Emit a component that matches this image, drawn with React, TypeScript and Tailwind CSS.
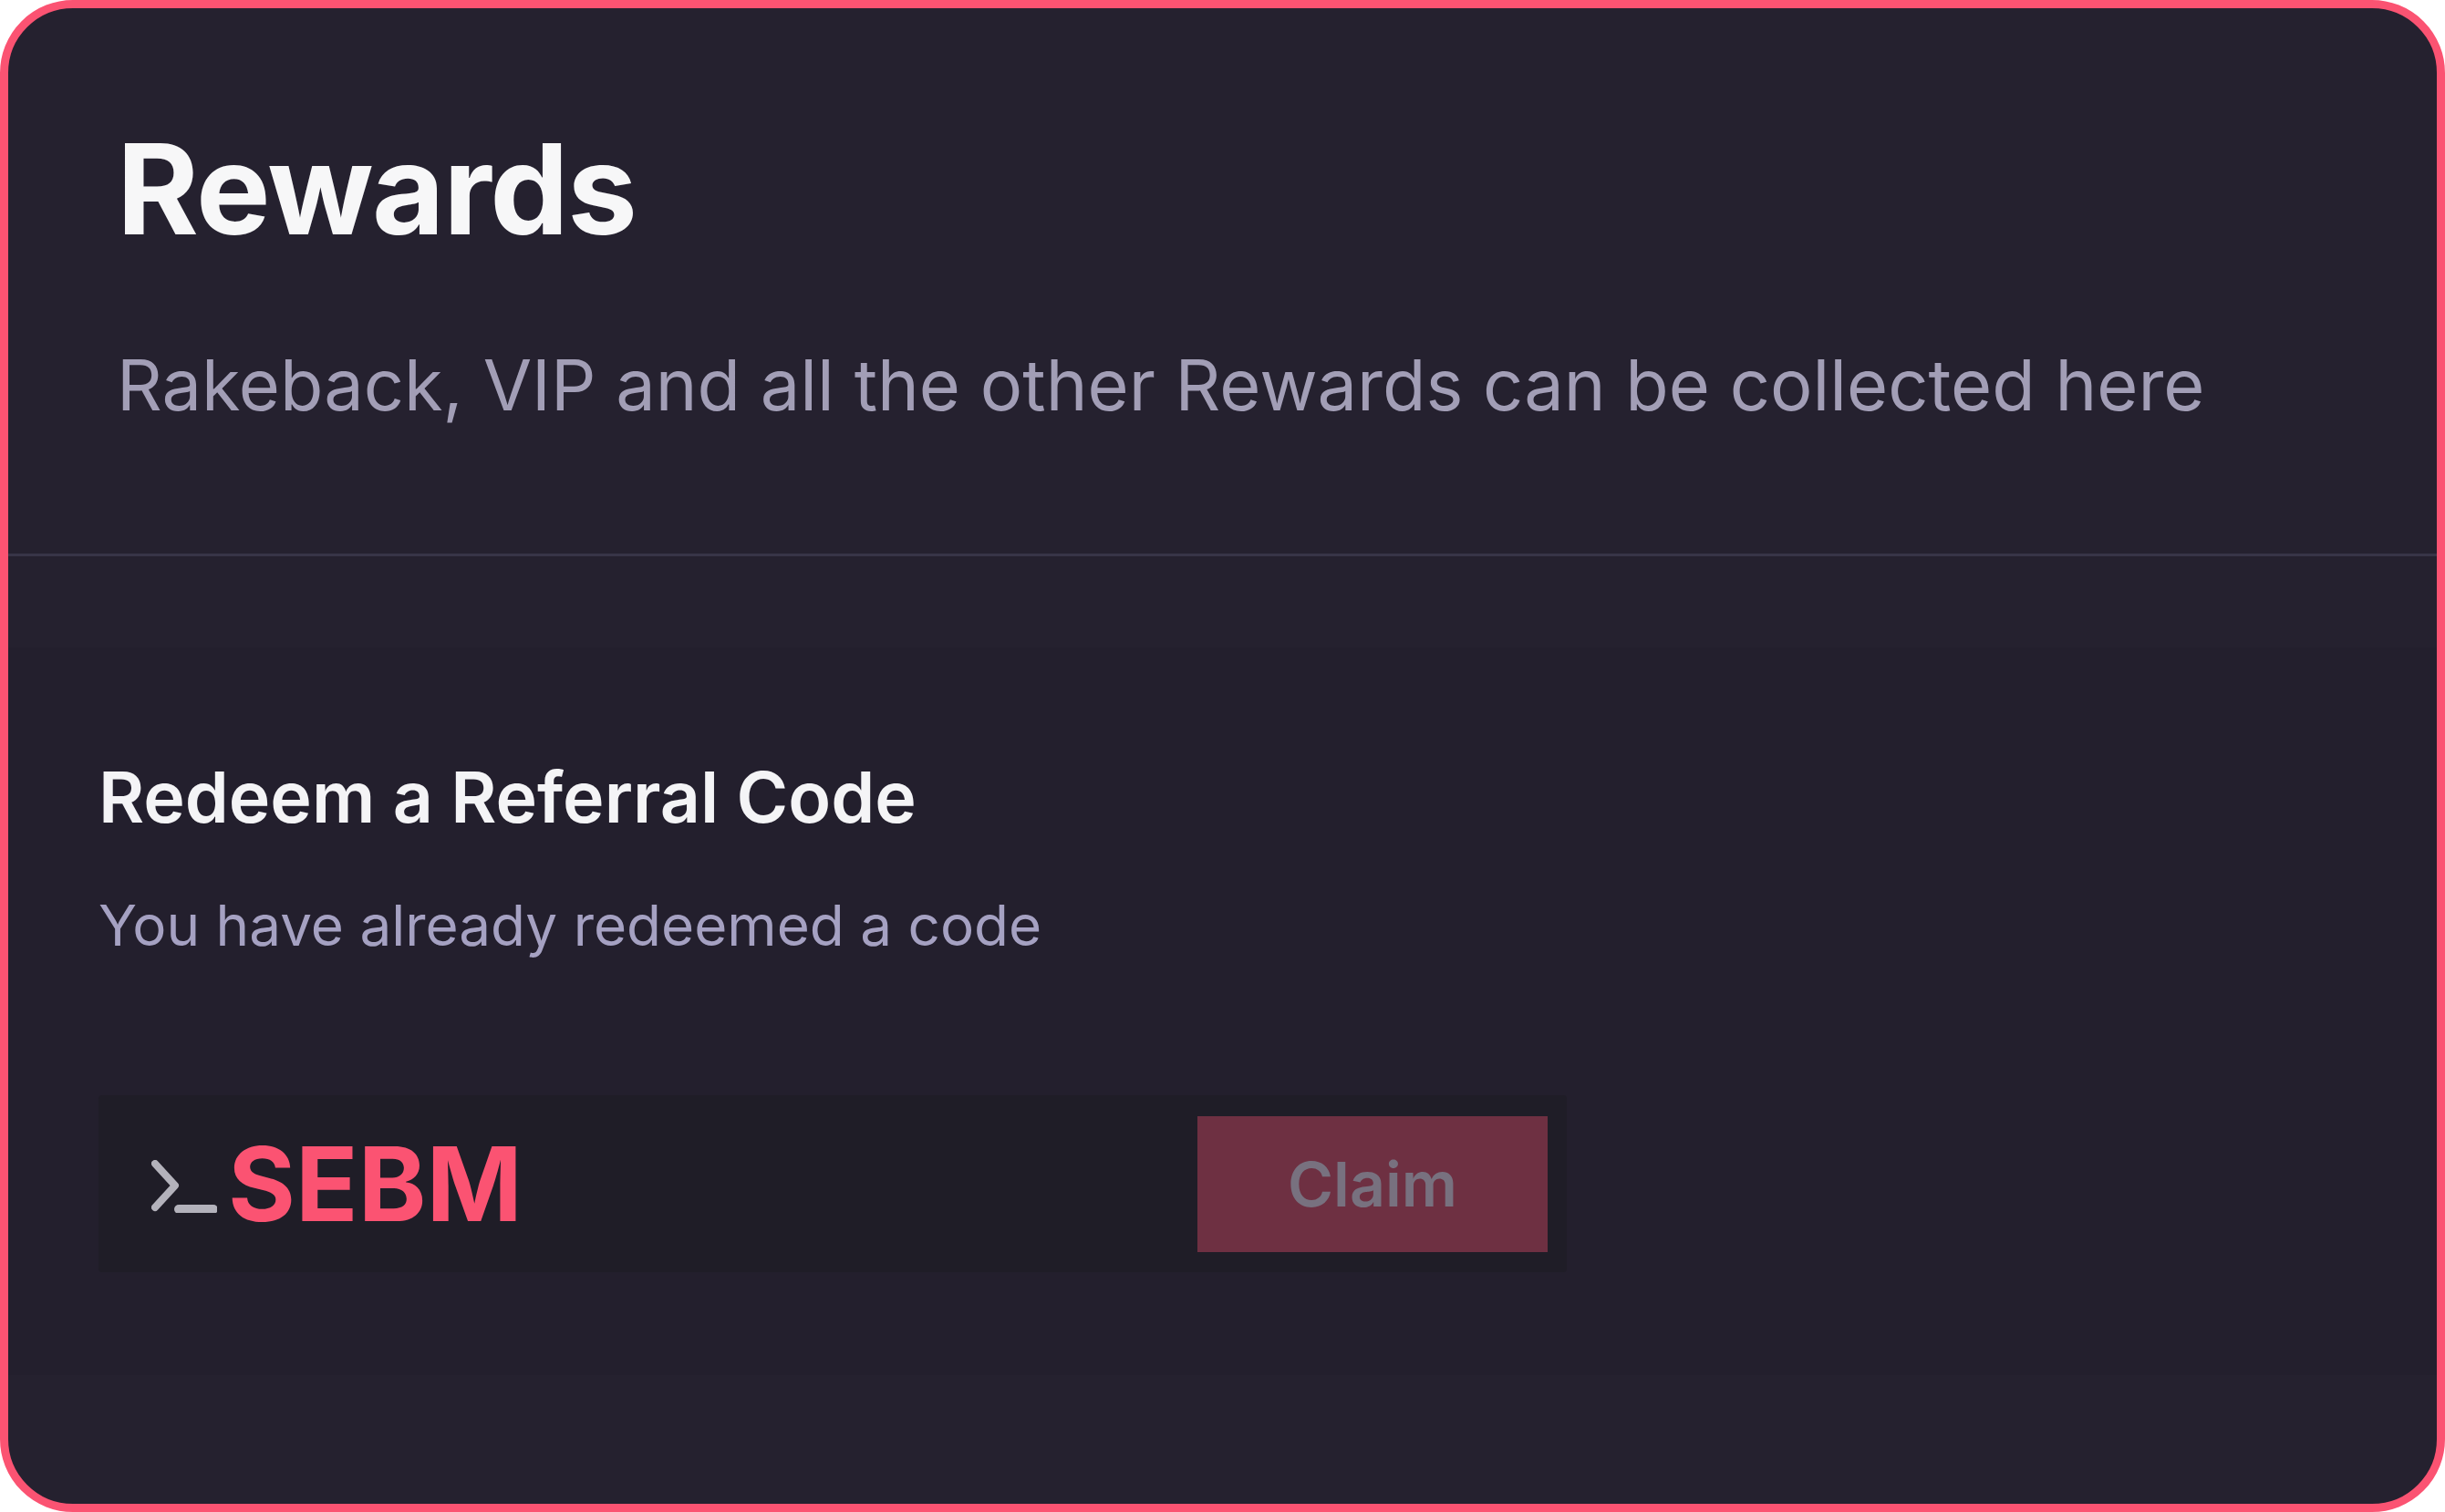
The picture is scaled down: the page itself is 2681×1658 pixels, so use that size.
const TerminalIcon = () => (
  <svg width="76" height="64" viewBox="0 0 76 64" fill="none" className="shrink-0 opacity-90">
    <path d="M8 10 L30 34 L8 58" stroke="#c4c3cc" strokeWidth="8" strokeLinecap="round" strokeLinejoin="round" />
    <path d="M34 60 H72" stroke="#c4c3cc" strokeWidth="10" strokeLinecap="round" />
  </svg>
);

export default function App() {
  return (
    <div
      className="w-[2681px] h-[1658px] bg-white"
      style={{ fontFamily: "Inter, 'Noto Sans', sans-serif" }}
    >
      <div className="w-full h-full rounded-[80px] border-[9px] border-[#fb5372] bg-[#25212f] overflow-hidden flex flex-col">
        {/* Header */}
        <div className="pt-[130px] pl-[119px] border-b-[3px] border-[#383547] h-[601px]">
          <h1 className="text-[137px] font-bold leading-none tracking-[-0.01em] text-[#f7f7f8]">
            Rewards
          </h1>
          <p className="mt-[108px] text-[77.5px] leading-none text-[#a29eb6]">
            Rakeback, VIP and all the other Rewards can be collected here
          </p>
        </div>

        <div className="h-[100px]" />

        {/* Referral section */}
        <div className="bg-[#231f2d] h-[798px] pl-[99px] pt-[126px]">
          <h2 className="text-[77px] font-semibold leading-none text-[#f4f4f6]">
            Redeem a Referral Code
          </h2>
          <p className="mt-[71px] text-[62px] leading-none text-[#a5a1c2]">
            You have already redeemed a code
          </p>

          <div className="mt-[155px] w-[1610px] h-[194px] bg-[#1f1d27] rounded-[4px] flex items-center pl-[54px] pr-[21px]">
            <TerminalIcon />
            <span className="ml-[12px] text-[113px] font-bold leading-none text-[#fb5372]">
              SEBM
            </span>
            <button className="ml-auto w-[384px] h-[149px] bg-[#6e3042] text-[68px] font-semibold text-[#78717f] leading-none">
              Claim
            </button>
          </div>
        </div>
      </div>
    </div>
  );
}
